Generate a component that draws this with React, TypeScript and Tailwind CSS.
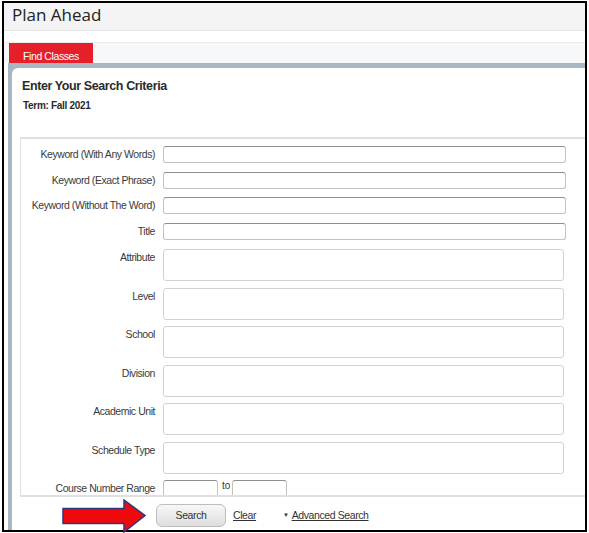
const font = "font-['Liberation_Sans',Arial,sans-serif]";

type Row = { label: string; kind: "input" | "area" | "range"; mt: number };

const rows: Row[] = [
  { label: "Keyword (With Any Words)", kind: "input", mt: 0 },
  { label: "Keyword (Exact Phrase)", kind: "input", mt: 9 },
  { label: "Keyword (Without The Word)", kind: "input", mt: 8 },
  { label: "Title", kind: "input", mt: 9 },
  { label: "Attribute", kind: "area", mt: 9 },
  { label: "Level", kind: "area", mt: 7 },
  { label: "School", kind: "area", mt: 6 },
  { label: "Division", kind: "area", mt: 7 },
  { label: "Academic Unit", kind: "area", mt: 6 },
  { label: "Schedule Type", kind: "area", mt: 7 },
  { label: "Course Number Range", kind: "range", mt: 6 },
];

function FieldRow({ row }: { row: Row }) {
  const input =
    "h-[17px] bg-white border border-[#c2c2c2] border-t-[#8e8e8e] rounded-[3px]";
  return (
    <div className="flex" style={{ marginTop: row.mt }}>
      <div className="w-[134px] text-right text-[10.5px] tracking-[-0.45px] leading-[12px] text-[#3a3a3a] pt-[2px]">
        {row.label}
      </div>
      <div className="ml-[8px]">
        {row.kind === "input" && <div className={`${input} w-[403px]`} />}
        {row.kind === "area" && (
          <div className="w-[401px] h-[32px] bg-white border border-[#d2d2d2] rounded-[3px]" />
        )}
        {row.kind === "range" && (
          <div className="flex items-start">
            <div className={`${input} w-[55px]`} />
            <span className="ml-[4px] mr-[2px] text-[10px] leading-[10px] text-[#3a3a3a] pt-[1px]">
              to
            </span>
            <div className={`${input} w-[55px]`} />
          </div>
        )}
      </div>
    </div>
  );
}

function Arrow() {
  return (
    <svg
      className="absolute left-[62px] top-[499px]"
      width="85"
      height="35"
      viewBox="0 0 85 35"
    >
      <polygon
        points="1,9.5 62,9.5 62,1 83,16.5 62,33 62,24.5 1,24.5"
        fill="#ee0a0a"
        stroke="#2d3580"
        strokeWidth="1.5"
        strokeLinejoin="miter"
      />
    </svg>
  );
}

export default function App() {
  return (
    <div className={`w-[589px] h-[533px] bg-white relative overflow-hidden ${font}`}>
      <div className="ml-[2px] mt-[1px] w-[585px] h-[531px] border-2 border-black overflow-hidden flex flex-col">
        <div className="h-[28px] shrink-0 bg-[#f4f4f4] border-b border-[#e4e4e4] pl-[8px]">
          <span className="font-['Open_Sans',sans-serif] text-[17px] text-[#222] leading-[24px]">
            Plan Ahead
          </span>
        </div>
        <div className="h-[12px] shrink-0 bg-white border-b border-[#ececec]" />
        <div className="h-[20px] shrink-0 bg-[#f6f8f9] pl-[5px]">
          <div className="w-[84px] h-full bg-[#e5202a] text-white text-[10.5px] tracking-[-0.4px] pl-[14px] pt-[7px] leading-[12px]">
            Find Classes
          </div>
        </div>
        <div className="flex-1 ml-[4px] bg-[#a9b7c2] pt-[5px] pl-[4px] flex min-h-0">
          <div className="flex-1 bg-white rounded-tl-[6px] pt-[10px] flex flex-col min-h-0">
            <div className="pl-[10px] text-[12.5px] tracking-[-0.4px] leading-[16px] font-bold text-[#2b2b2b]">
              Enter Your Search Criteria
            </div>
            <div className="pl-[11px] mt-[6px] text-[10px] tracking-[-0.3px] leading-[12px] font-bold text-[#2b2b2b]">
              Term: Fall 2021
            </div>
            <div className="ml-[8px] mt-[25px] h-[360px] shrink-0 overflow-hidden border-t-2 border-l border-b-2 border-[#e0e0e0] pt-[7px]">
              {rows.map((row) => (
                <FieldRow key={row.label} row={row} />
              ))}
            </div>
            <div className="flex items-center pl-[144px] pt-[7px] text-[10.5px] tracking-[-0.4px] text-[#333]">
              <div className="w-[70px] h-[23px] rounded-[6px] border border-[#bdbdbd] bg-gradient-to-b from-[#f7f7f7] to-[#dedede] flex items-center justify-center">
                Search
              </div>
              <span className="ml-[7px] underline">Clear</span>
              <span className="ml-[27px] flex items-center">
                <span className="text-[6px] mr-[3px]">▼</span>
                <span className="underline">Advanced Search</span>
              </span>
            </div>
          </div>
        </div>
      </div>
      <Arrow />
    </div>
  );
}
